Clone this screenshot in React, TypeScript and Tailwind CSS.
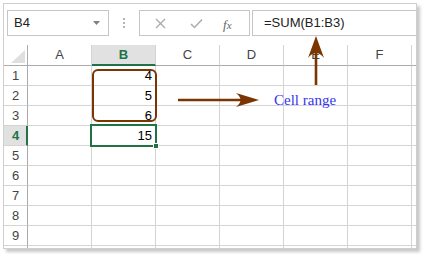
import React from "react";

const cols = ["A", "B", "C", "D", "E", "F"];
const rows = [1, 2, 3, 4, 5, 6, 7, 8, 9];
const values: Record<number, string> = { 1: "4", 2: "5", 3: "6", 4: "15" };

export default function App() {
  return (
    <div
      className="relative w-[423px] h-[254px] bg-white overflow-hidden"
      style={{ fontFamily: '"Liberation Sans", Arial, sans-serif' }}
    >
      <div className="ml-[3px] mt-[3px] w-[414px] h-[246px] border border-[#cfcfcf] bg-white shadow-[3px_3px_3px_rgba(0,0,0,0.22)] flex flex-col">
        {/* Formula bar */}
        <div className="h-[41px] flex items-start pt-[6px] pl-[3px] shrink-0">
          <div className="w-[102px] h-[26px] border border-[#c6c6c6] flex items-center justify-between pl-[6px] pr-[8px] text-[13px] text-[#222]">
            <span>B4</span>
            <svg width="7" height="4" viewBox="0 0 7 4">
              <path d="M0 0 H7 L3.5 4 Z" fill="#808080" />
            </svg>
          </div>
          <div className="w-[30px] h-[26px] flex flex-col items-center justify-center gap-[2px]">
            <div className="w-[2px] h-[2px] bg-[#b4b4b4]" />
            <div className="w-[2px] h-[2px] bg-[#b4b4b4]" />
            <div className="w-[2px] h-[2px] bg-[#b4b4b4]" />
          </div>
          <div className="w-[111px] h-[26px] border border-[#c6c6c6] relative">
            <svg className="absolute left-[15px] top-[7px]" width="11" height="11" viewBox="0 0 11 11">
              <path d="M1 1 L10 10 M10 1 L1 10" stroke="#ababab" strokeWidth="1.4" />
            </svg>
            <svg className="absolute left-[50px] top-[7px]" width="13" height="11" viewBox="0 0 13 11">
              <path d="M1 6 L4.5 9.5 L12 1.5" stroke="#ababab" strokeWidth="1.5" fill="none" />
            </svg>
            <span
              className="absolute left-[83px] top-[4px] text-[13px] italic text-[#666]"
              style={{ fontFamily: '"Liberation Serif", "Times New Roman", serif' }}
            >
              f<span className="text-[11px]">x</span>
            </span>
          </div>
          <div className="w-[2px]" />
          <div className="flex-1 h-[26px] border border-r-0 border-[#c6c6c6] flex items-center pl-[11px] text-[13px] text-[#222]">
            =SUM(B1:B3)
          </div>
        </div>

        {/* Grid */}
        <div className="grid grid-cols-[24px_64px_64px_64px_64px_64px_64px_1fr] grid-rows-[21px_repeat(9,20px)_1fr] flex-1 text-[13px]">
          <div className="border-r border-b border-r-[#ababab] border-b-[#ababab] flex items-end justify-end pr-[2px] pb-[2px]">
            <svg width="14" height="13" viewBox="0 0 14 13">
              <path d="M14 0 L14 13 L0 13 Z" fill="#dfdfdf" />
            </svg>
          </div>
          {cols.map((c) =>
            c === "B" ? (
              <div
                key={c}
                className="bg-[#e1e1e1] border-r border-r-[#d4d4d4] border-b-2 border-b-[#217346] flex items-center justify-center text-[#217346] font-bold"
              >
                {c}
              </div>
            ) : (
              <div
                key={c}
                className="border-r border-r-[#d4d4d4] border-b border-b-[#ababab] flex items-center justify-center text-[#444]"
              >
                {c}
              </div>
            )
          )}
          <div className="border-b border-b-[#ababab]" />
          {rows.map((r) => (
            <React.Fragment key={r}>
              {r === 4 ? (
                <div className="bg-[#e1e1e1] border-r-2 border-r-[#217346] border-b border-b-[#d4d4d4] flex items-center pl-[8px] text-[#217346] font-bold">
                  {r}
                </div>
              ) : (
                <div className="border-r border-r-[#ababab] border-b border-b-[#d4d4d4] flex items-center pl-[8px] text-[#444]">
                  {r}
                </div>
              )}
              {cols.map((c) => (
                <div
                  key={c}
                  className="border-r border-b border-[#d4d4d4] flex items-center justify-end pr-[3px] text-black"
                >
                  {c === "B" ? values[r] ?? "" : ""}
                </div>
              ))}
              <div className="border-b border-[#d4d4d4]" />
            </React.Fragment>
          ))}
          <div className="border-r border-r-[#ababab]" />
          {cols.map((c) => (
            <div key={c} className="border-r border-[#d4d4d4]" />
          ))}
          <div />
        </div>
      </div>

      {/* Selection on B4 */}
      <div className="absolute left-[90px] top-[124px] w-[67px] h-[23px] border-2 border-[#217346]" />
      <div className="absolute left-[153px] top-[143px] w-[6px] h-[6px] bg-[#217346] border border-white" />

      {/* Annotations */}
      <svg className="absolute left-0 top-0" width="423" height="254" viewBox="0 0 423 254">
        <rect x="93" y="70" width="63" height="51" rx="5" ry="5" fill="none" stroke="#7a3500" strokeWidth="2" />
        <path d="M178 100 H250" stroke="#7a3500" strokeWidth="2.4" />
        <path d="M259 100 L236 93 Q245 100 236 107 Z" fill="#7a3500" />
        <path d="M316 85 V45" stroke="#7a3500" strokeWidth="2.6" />
        <path d="M316 36 L308 58 Q316 48 324 58 Z" fill="#7a3500" />
      </svg>
      <div
        className="absolute left-[274px] top-[90px] text-[15px] leading-[20px] text-[#3434f0]"
        style={{ fontFamily: '"Liberation Serif", "Times New Roman", serif' }}
      >
        Cell range
      </div>
    </div>
  );
}
